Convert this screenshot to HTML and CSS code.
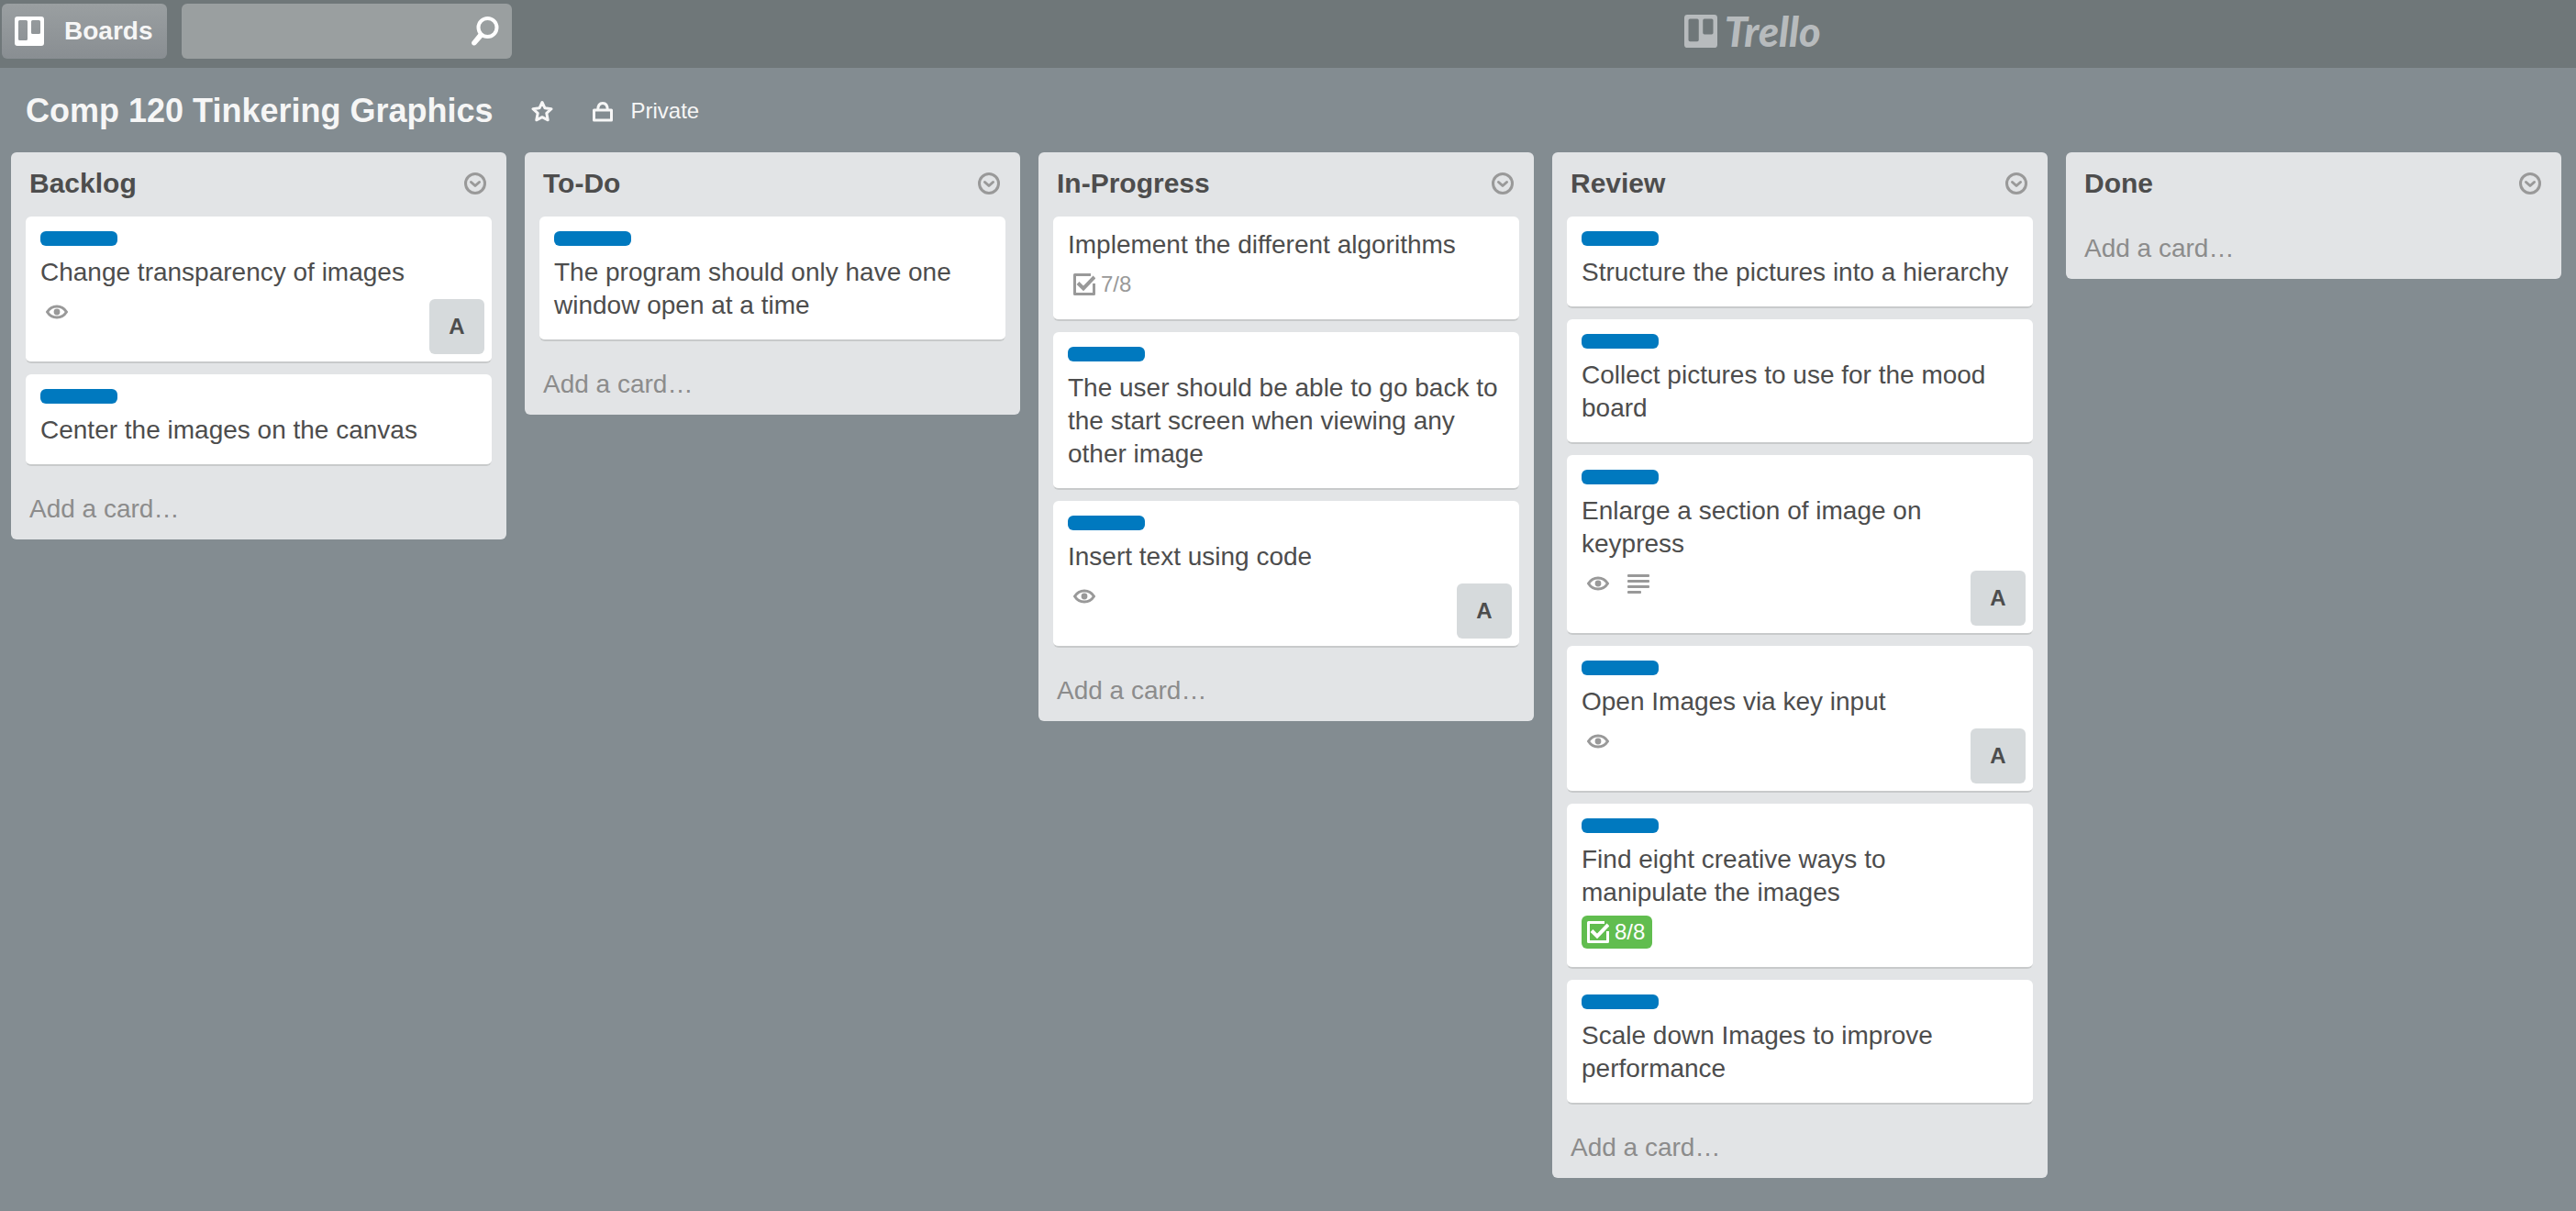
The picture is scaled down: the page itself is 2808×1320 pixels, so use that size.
FILE: index.html
```html
<!DOCTYPE html>
<html lang="en">
<head>
<meta charset="utf-8">
<meta name="viewport" content="width=device-width, initial-scale=1">
<title>Comp 120 Tinkering Graphics | Trello</title>
<link rel="stylesheet" href="styles.css">
</head>
<body>
<svg class="sprite" aria-hidden="true">
  <symbol id="board" viewBox="0 0 32 32"><path fill-rule="evenodd" d="M3 0h26a3 3 0 0 1 3 3v26a3 3 0 0 1-3 3H3a3 3 0 0 1-3-3V3a3 3 0 0 1 3-3zM5.500 4A1.500 1.500 0 0 0 4 5.500v19A1.500 1.500 0 0 0 5.500 26h7a1.500 1.500 0 0 0 1.500-1.500v-19A1.500 1.500 0 0 0 12.500 4zM19.500 4A1.500 1.500 0 0 0 18 5.500v12a1.500 1.500 0 0 0 1.500 1.500h7a1.500 1.500 0 0 0 1.500-1.500v-12A1.500 1.500 0 0 0 26.500 4z"/></symbol>
  <symbol id="search" viewBox="0 0 32 32"><circle cx="19.500" cy="12" r="10" fill="none" stroke="currentColor" stroke-width="4"/><path d="M10.500 17.500l4.500 4-8 9a2.800 2.800 0 0 1-5-1.500c0-1 .3-1.700 1-2.300z"/></symbol>
  <symbol id="star" viewBox="0 0 24 24"><path fill="none" stroke="currentColor" stroke-width="3" stroke-linejoin="round" d="M12 2.500l3 6.300 7 .9-5.200 4.700 1.400 7.400L12 18.700l-6.200 3.100 1.400-7.400L2 9.700l7-.9z"/></symbol>
  <symbol id="lock" viewBox="0 0 24 24"><path fill="none" stroke="currentColor" stroke-width="3" stroke-linejoin="round" d="M2.500 11h19v11h-19z"/><path fill="none" stroke="currentColor" stroke-width="3" d="M6.700 11c0-4.500 1.800-7.500 5.300-7.500s5.300 3 5.300 7.500"/></symbol>
  <symbol id="menu" viewBox="0 0 24 24"><g fill="none" stroke="currentColor" stroke-width="3"><circle cx="12" cy="12" r="10.500"/><path stroke-linecap="round" stroke-linejoin="round" d="M7.500 10.500l4.500 4 4.500-4"/></g></symbol>
  <symbol id="eye" viewBox="0 0 24 24"><path fill="none" stroke="currentColor" stroke-width="3" stroke-linejoin="round" d="M1.500 12C4 8 7.500 6 12 6s8 2 10.500 6c-2.500 4-6 6-10.500 6s-8-2-10.500-6z"/><circle cx="12" cy="12" r="3.400"/></symbol>
  <symbol id="check" viewBox="0 0 24 24"><g fill="none" stroke="currentColor"><path stroke-width="3" stroke-linejoin="round" d="M19 1.500H1.500v21h21V11"/><path stroke-width="4" d="M5 10.500l6 6L23 4"/></g></symbol>
  <symbol id="text" viewBox="0 0 24 24"><rect y="2" width="24" height="3" rx="1"/><rect y="8" width="24" height="3" rx="1"/><rect y="14" width="24" height="3" rx="1"/><rect y="20" width="15" height="3" rx="1"/></symbol>
</svg>

<header class="topbar">
  <button class="boards" type="button"><svg class="icon-lg" aria-hidden="true"><use href="#board"/></svg>Boards</button>
  <form class="search" role="search">
    <input class="search-input" type="search" aria-label="Search">
    <button class="search-button" type="submit" aria-label="Search"><svg class="icon-lg" aria-hidden="true"><use href="#search"/></svg></button>
  </form>
  <a class="logo" href="#"><svg class="logo-mark" aria-hidden="true"><use href="#board"/></svg>Trello</a>
</header>

<main>
  <div class="board-header">
    <h1 class="board-title">Comp 120 Tinkering Graphics</h1>
    <button class="board-button" type="button" aria-label="Star board"><svg class="icon" aria-hidden="true"><use href="#star"/></svg></button>
    <button class="board-button" type="button"><svg class="icon" aria-hidden="true"><use href="#lock"/></svg>Private</button>
  </div>

  <div class="board">
    <section class="list">
      <div class="list-header"><h2 class="list-title">Backlog</h2><button class="list-menu" type="button" aria-label="List actions"><svg class="icon" aria-hidden="true"><use href="#menu"/></svg></button></div>
      <article class="card">
        <span class="label"></span>
        <a class="card-title" href="#">Change transparency of images</a>
        <div class="card-footer">
          <div class="badges"><span class="badge"><svg class="icon" aria-hidden="true"><use href="#eye"/></svg></span></div>
          <button class="member" type="button">A</button>
        </div>
      </article>
      <article class="card">
        <span class="label"></span>
        <a class="card-title" href="#">Center the images on the canvas</a>
      </article>
      <button class="add-card" type="button">Add a card…</button>
    </section>

    <section class="list">
      <div class="list-header"><h2 class="list-title">To-Do</h2><button class="list-menu" type="button" aria-label="List actions"><svg class="icon" aria-hidden="true"><use href="#menu"/></svg></button></div>
      <article class="card">
        <span class="label"></span>
        <a class="card-title" href="#">The program should only have one window open at a time</a>
      </article>
      <button class="add-card" type="button">Add a card…</button>
    </section>

    <section class="list">
      <div class="list-header"><h2 class="list-title">In-Progress</h2><button class="list-menu" type="button" aria-label="List actions"><svg class="icon" aria-hidden="true"><use href="#menu"/></svg></button></div>
      <article class="card">
        <a class="card-title" href="#">Implement the different algorithms</a>
        <div class="card-footer">
          <div class="badges"><span class="badge"><svg class="icon" aria-hidden="true"><use href="#check"/></svg>7/8</span></div>
        </div>
      </article>
      <article class="card">
        <span class="label"></span>
        <a class="card-title" href="#">The user should be able to go back to the start screen when viewing any other image</a>
      </article>
      <article class="card">
        <span class="label"></span>
        <a class="card-title" href="#">Insert text using code</a>
        <div class="card-footer">
          <div class="badges"><span class="badge"><svg class="icon" aria-hidden="true"><use href="#eye"/></svg></span></div>
          <button class="member" type="button">A</button>
        </div>
      </article>
      <button class="add-card" type="button">Add a card…</button>
    </section>

    <section class="list">
      <div class="list-header"><h2 class="list-title">Review</h2><button class="list-menu" type="button" aria-label="List actions"><svg class="icon" aria-hidden="true"><use href="#menu"/></svg></button></div>
      <article class="card">
        <span class="label"></span>
        <a class="card-title" href="#">Structure the pictures into a hierarchy</a>
      </article>
      <article class="card">
        <span class="label"></span>
        <a class="card-title" href="#">Collect pictures to use for the mood board</a>
      </article>
      <article class="card">
        <span class="label"></span>
        <a class="card-title" href="#">Enlarge a section of image on keypress</a>
        <div class="card-footer">
          <div class="badges"><span class="badge"><svg class="icon" aria-hidden="true"><use href="#eye"/></svg></span><span class="badge"><svg class="icon" aria-hidden="true"><use href="#text"/></svg></span></div>
          <button class="member" type="button">A</button>
        </div>
      </article>
      <article class="card">
        <span class="label"></span>
        <a class="card-title" href="#">Open Images via key input</a>
        <div class="card-footer">
          <div class="badges"><span class="badge"><svg class="icon" aria-hidden="true"><use href="#eye"/></svg></span></div>
          <button class="member" type="button">A</button>
        </div>
      </article>
      <article class="card">
        <span class="label"></span>
        <a class="card-title" href="#">Find eight creative ways to manipulate the images</a>
        <div class="card-footer">
          <div class="badges"><span class="badge badge-complete"><svg class="icon" aria-hidden="true"><use href="#check"/></svg>8/8</span></div>
        </div>
      </article>
      <article class="card">
        <span class="label"></span>
        <a class="card-title" href="#">Scale down Images to improve performance</a>
      </article>
      <button class="add-card" type="button">Add a card…</button>
    </section>

    <section class="list">
      <div class="list-header"><h2 class="list-title">Done</h2><button class="list-menu" type="button" aria-label="List actions"><svg class="icon" aria-hidden="true"><use href="#menu"/></svg></button></div>
      <button class="add-card" type="button">Add a card…</button>
    </section>
  </div>
</main>
</body>
</html>
```

FILE: styles.css
```css
* {
  box-sizing: border-box;
}

body {
  margin: 0;
  min-height: 100vh;
  background: #838c91;
  color: #4d4d4d;
  font-family: "Liberation Sans", Arial, sans-serif;
  font-size: 28px;
  line-height: 36px;
}

button,
input {
  margin: 0;
  padding: 0;
  border: 0;
  background: none;
  color: inherit;
  font: inherit;
}

button {
  cursor: pointer;
}

a {
  color: inherit;
  text-decoration: none;
}

h1,
h2 {
  margin: 0;
}

svg {
  flex: none;
  fill: currentColor;
}

.sprite {
  display: none;
}

.icon {
  width: 24px;
  height: 24px;
}

.icon-lg {
  width: 32px;
  height: 32px;
}

/* Top bar */

.topbar {
  display: flex;
  align-items: center;
  height: 74px;
  padding: 0 2px 6px;
  background: #6f7779;
}

/* The logo sits right of centre: free space is split 14 to 9 around it. */
.topbar::before,
.topbar::after {
  content: "";
}

.topbar::before {
  order: 1;
  flex: 14 1 0;
}

.topbar::after {
  order: 3;
  flex: 9 1 0;
}

/* The two controls before the logo keep their place ahead of the spacer. */
.boards {
  display: flex;
  align-items: center;
  gap: 22px;
  width: 180px;
  height: 60px;
  padding-left: 14px;
  border-radius: 6px;
  background: linear-gradient(#9a9fa1, #898e92);
  color: #f6f6f6;
  font-weight: 700;
}

.boards .icon-lg {
  color: #fff;
}

.search {
  display: flex;
  align-items: center;
  width: 360px;
  height: 60px;
  margin-left: 16px;
  padding-right: 14px;
  border-radius: 6px;
  background: #9a9fa0;
  color: #fff;
}

.search-input {
  flex: 1;
  min-width: 0;
  height: 60px;
  padding: 0 16px;
  outline: 0;
  appearance: none;
}

.search-button {
  display: flex;
}

.logo {
  order: 2;
  display: flex;
  align-items: center;
  gap: 8px;
  color: #b7bbbd;
  font-family: Lato, sans-serif;
  font-size: 45px;
  font-style: italic;
  font-weight: 900;
}

.logo-mark {
  width: 36px;
  height: 36px;
}

/* Board header */

.board-header {
  display: flex;
  align-items: center;
  height: 92px;
  padding: 2px 28px 0;
  color: #f6f6f6;
}

.board-title {
  margin-right: 20px;
  font-size: 36px;
  line-height: 48px;
}

.board-button {
  display: flex;
  align-items: center;
  gap: 18px;
  margin-right: 20px;
  padding: 0 12px 0 22px;
  font-size: 24px;
}

.board-button:first-of-type {
  padding-right: 0;
}

/* Lists */

.board {
  display: grid;
  grid-template-columns: repeat(5, minmax(320px, 1fr));
  align-items: start;
  gap: 20px;
  padding: 0 16px 36px 12px;
}

.list {
  border-radius: 6px;
  background: #e2e4e6;
}

.list-header {
  display: flex;
  align-items: center;
  justify-content: space-between;
  height: 70px;
  padding: 0 22px 2px 20px;
}

.list-title {
  font-size: 30px;
}

.list-menu {
  display: flex;
  color: #999;
}

.add-card {
  display: block;
  width: 100%;
  padding: 17px 20px 15px;
  color: #8c8c8c;
  text-align: left;
}

/* Cards */

.card {
  margin: 0 16px 12px;
  padding: 13px 8px 8px 16px;
  border-bottom: 2px solid #c8cacb;
  border-radius: 6px;
  background: #fff;
}

.label {
  display: block;
  width: 84px;
  height: 16px;
  margin: 3px 0 11px;
  border-radius: 6px;
  background: #0079bf;
}

.card-title {
  display: block;
  margin-right: 8px;
}

.card-title:last-child {
  margin-bottom: 11px;
}

.card-footer {
  display: flex;
  align-items: flex-start;
  justify-content: space-between;
  padding-top: 7px;
}

.badges {
  display: flex;
  gap: 6px;
  margin-bottom: 12px;
}

.badge {
  display: flex;
  align-items: center;
  gap: 6px;
  height: 36px;
  padding: 0 8px 0 6px;
  border-radius: 6px;
  color: #999;
  font-size: 24px;
}

.badge-complete {
  background: #61bd4f;
  color: #fff;
}

.member {
  width: 60px;
  height: 60px;
  margin-top: 4px;
  border-radius: 6px;
  background: #d6dadc;
  font-size: 24px;
  font-weight: 700;
}
```
